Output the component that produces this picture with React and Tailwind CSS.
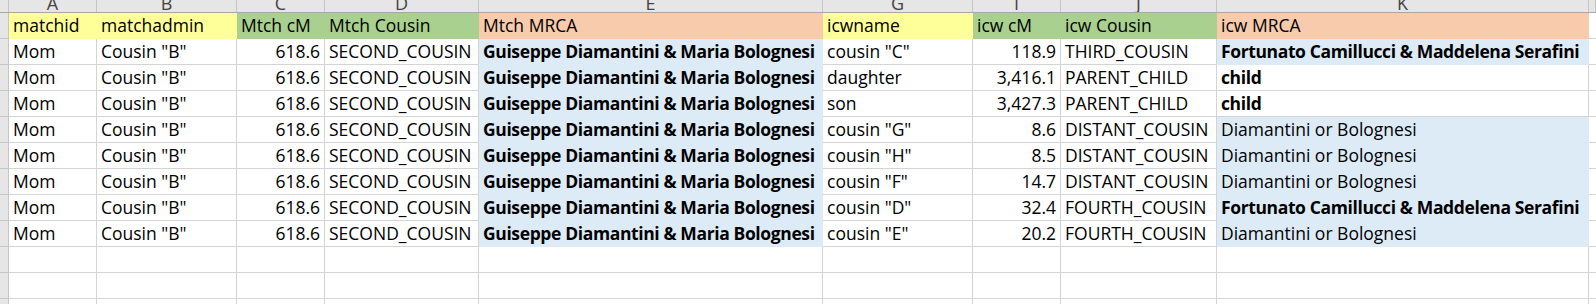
import React from "react";

const COLS = [
  { w: "w-[9px]", letter: "" },
  { w: "w-[88px]", letter: "A" },
  { w: "w-[140px]", letter: "B" },
  { w: "w-[88px]", letter: "C" },
  { w: "w-[154px]", letter: "D" },
  { w: "w-[344px]", letter: "E" },
  { w: "w-[150px]", letter: "G" },
  { w: "w-[88px]", letter: "I" },
  { w: "w-[156px]", letter: "J" },
  { w: "w-[372px]", letter: "K" },
  { w: "w-[7px]", letter: "" },
];

const YEL = "bg-[#ffff99] border-[#ffff99]";
const GRN = "bg-[#a9d08e] border-[#a9d08e]";
const ORG = "bg-[#f8cbad] border-[#f8cbad]";
const BLU = "bg-[#ddebf7] border-[#ddebf7]";
const WHT = "bg-white border-[#d4d4d4]";

const header = [
  { t: "matchid", fill: YEL },
  { t: "matchadmin", fill: YEL },
  { t: "Mtch cM", fill: GRN },
  { t: "Mtch Cousin", fill: GRN },
  { t: "Mtch MRCA", fill: ORG },
  { t: "icwname", fill: YEL },
  { t: "icw cM", fill: GRN },
  { t: "icw Cousin", fill: GRN },
  { t: "icw MRCA", fill: ORG },
];

const data = [
  ['cousin "C"', "118.9", "THIRD_COUSIN", "Fortunato Camillucci & Maddelena Serafini", true, true],
  ["daughter", "3,416.1", "PARENT_CHILD", "child", true, false],
  ["son", "3,427.3", "PARENT_CHILD", "child", true, false],
  ['cousin "G"', "8.6", "DISTANT_COUSIN", "Diamantini or Bolognesi", false, true],
  ['cousin "H"', "8.5", "DISTANT_COUSIN", "Diamantini or Bolognesi", false, true],
  ['cousin "F"', "14.7", "DISTANT_COUSIN", "Diamantini or Bolognesi", false, true],
  ['cousin "D"', "32.4", "FOURTH_COUSIN", "Fortunato Camillucci & Maddelena Serafini", true, true],
  ['cousin "E"', "20.2", "FOURTH_COUSIN", "Diamantini or Bolognesi", false, true],
];

function Cell({ w, fill, right, bold, children }) {
  return (
    <div
      className={`${w} h-[26px] shrink-0 border-r border-b ${fill} flex items-end pb-[2px] px-[4px] overflow-hidden whitespace-nowrap ${
        right ? "justify-end" : "justify-start"
      } ${bold ? "font-bold tracking-[-0.38px]" : "font-normal"}`}
    >
      <span className="leading-[22px]">{children}</span>
    </div>
  );
}

function RowHead() {
  return <div className="w-[9px] h-[26px] shrink-0 bg-[#e6e6e6] border-r border-b border-[#c6c6c6]" />;
}

export default function App() {
  const rows = [];
  rows.push(
    <div key="h" className="flex">
      <RowHead />
      {header.map((h, i) => (
        <Cell key={i} w={COLS[i + 1].w} fill={h.fill}>
          {h.t}
        </Cell>
      ))}
      <Cell w={COLS[10].w} fill={WHT} />
    </div>
  );
  data.forEach((d, r) => {
    const cells = [
      { t: "Mom", fill: WHT },
      { t: 'Cousin "B"', fill: WHT },
      { t: "618.6", fill: WHT, right: true },
      { t: "SECOND_COUSIN", fill: WHT },
      { t: "Guiseppe Diamantini & Maria Bolognesi", fill: BLU, bold: true },
      { t: d[0], fill: WHT },
      { t: d[1], fill: WHT, right: true },
      { t: d[2], fill: WHT },
      { t: d[3], fill: d[5] ? BLU : WHT, bold: d[4] },
    ];
    rows.push(
      <div key={r} className="flex">
        <RowHead />
        {cells.map((c, i) => (
          <Cell key={i} w={COLS[i + 1].w} fill={c.fill} right={c.right} bold={c.bold}>
            {c.t}
          </Cell>
        ))}
        <Cell w={COLS[10].w} fill={WHT} />
      </div>
    );
  });
  for (let r = 0; r < 3; r++) {
    rows.push(
      <div key={"e" + r} className="flex">
        <RowHead />
        {COLS.slice(1).map((c, i) => (
          <Cell key={i} w={c.w} fill={WHT} />
        ))}
      </div>
    );
  }

  return (
    <div
      className="w-[1596px] h-[304px] overflow-hidden bg-white text-[17.5px] text-black"
      style={{ fontFamily: "'Open Sans', Lato, sans-serif" }}
    >
      <div className="flex h-[13px] bg-[#e6e6e6] border-b border-[#a8a8a8]">
        {COLS.map((c, i) => (
          <div
            key={i}
            className={`${c.w} h-[12px] shrink-0 border-r border-[#c6c6c6] overflow-hidden flex justify-center`}
          >
            <span className="-mt-[8px] leading-[22px] text-[#444444] text-[18px]">{c.letter}</span>
          </div>
        ))}
      </div>
      {rows}
    </div>
  );
}
